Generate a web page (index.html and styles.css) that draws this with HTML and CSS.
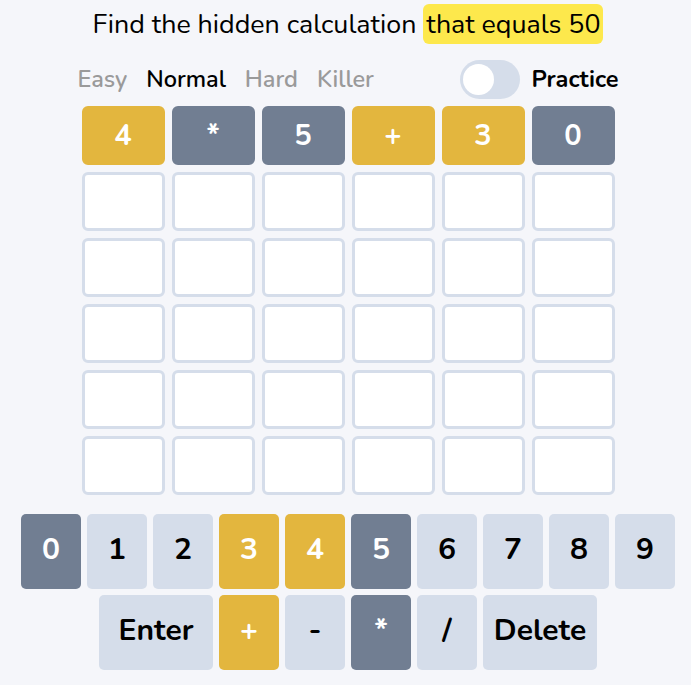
FILE: index.html
```html
<!DOCTYPE html>
<html lang="en">
<head>
  <meta charset="UTF-8">
  <meta name="viewport" content="width=device-width, initial-scale=1.0">
  <title>Calculation Game</title>
  <link rel="stylesheet" href="styles.css">
</head>
<body>
  <div class="game">
    <!-- Title -->
    <h1 class="title">Find the hidden calculation <span class="target">that equals 50</span></h1>

    <!-- Options -->
    <div class="options">
      <div class="levels">
        <span class="level">Easy</span>
        <span class="level active">Normal</span>
        <span class="level">Hard</span>
        <span class="level">Killer</span>
      </div>
      <label class="practice">
        <span class="switch"><span class="knob"></span></span>
        Practice
      </label>
    </div>

    <!-- Board -->
    <div class="board">
      <div class="tile present">4</div>
      <div class="tile absent">*</div>
      <div class="tile absent">5</div>
      <div class="tile present">+</div>
      <div class="tile present">3</div>
      <div class="tile absent">0</div>

      <div class="tile"></div><div class="tile"></div><div class="tile"></div>
      <div class="tile"></div><div class="tile"></div><div class="tile"></div>
      <div class="tile"></div><div class="tile"></div><div class="tile"></div>
      <div class="tile"></div><div class="tile"></div><div class="tile"></div>
      <div class="tile"></div><div class="tile"></div><div class="tile"></div>
      <div class="tile"></div><div class="tile"></div><div class="tile"></div>
      <div class="tile"></div><div class="tile"></div><div class="tile"></div>
      <div class="tile"></div><div class="tile"></div><div class="tile"></div>
      <div class="tile"></div><div class="tile"></div><div class="tile"></div>
      <div class="tile"></div><div class="tile"></div><div class="tile"></div>
    </div>

    <!-- Keyboard -->
    <div class="keyboard">
      <div class="key-row">
        <button class="key absent">0</button>
        <button class="key">1</button>
        <button class="key">2</button>
        <button class="key present">3</button>
        <button class="key present">4</button>
        <button class="key absent">5</button>
        <button class="key">6</button>
        <button class="key">7</button>
        <button class="key">8</button>
        <button class="key">9</button>
      </div>
      <div class="key-row">
        <button class="key wide">Enter</button>
        <button class="key present">+</button>
        <button class="key">-</button>
        <button class="key absent">*</button>
        <button class="key">/</button>
        <button class="key wide">Delete</button>
      </div>
    </div>
  </div>
</body>
</html>
```

FILE: styles.css
```css
/* General Styles */
body {
  margin: 0;
  background: #f5f6fa;
  font-family: 'Nunito', 'Open Sans', sans-serif;
  color: #000;
}

.game {
  display: flex;
  flex-direction: column;
  align-items: center;
  padding-left: 5px;
}

/* Title */
.title {
  margin: 7px 0 0;
  font-size: 26.8px;
  font-weight: 400;
  line-height: 34px;
}

.target {
  background: #fde84c;
  border-radius: 6px;
  padding: 2px 3px;
}

/* Options */
.options {
  display: flex;
  align-items: center;
  justify-content: space-between;
  width: 541px;
  height: 40px;
  margin-top: 18px;
}

.levels {
  display: flex;
  gap: 19px;
}

.level {
  font-size: 23.5px;
  font-weight: 600;
  color: #9a9a9a;
}

.level.active {
  color: #000;
}

.practice {
  display: flex;
  align-items: center;
  gap: 11px;
  font-size: 23.5px;
  font-weight: 700;
}

.switch {
  display: block;
  width: 60px;
  height: 39px;
  border-radius: 20px;
  background: #d5ddea;
  padding: 4px 3px;
  box-sizing: border-box;
}

.knob {
  display: block;
  width: 31px;
  height: 31px;
  border-radius: 50%;
  background: #fff;
}

/* Board */
.board {
  display: grid;
  grid-template-columns: repeat(6, 83px);
  grid-auto-rows: 59px;
  gap: 7px;
  margin-top: 7px;
}

.tile {
  display: flex;
  align-items: center;
  justify-content: center;
  background: #fff;
  border: 3px solid #d5ddea;
  border-radius: 6px;
  font-size: 29px;
  font-weight: 700;
  color: #fff;
}

.tile.present {
  background: #e3b63e;
  border-color: #e3b63e;
}

.tile.absent {
  background: #717e92;
  border-color: #717e92;
}

/* Keyboard */
.keyboard {
  display: flex;
  flex-direction: column;
  align-items: center;
  gap: 6px;
  margin-top: 19px;
}

.key-row {
  display: flex;
  gap: 6px;
}

.key {
  width: 60px;
  height: 75px;
  border: none;
  border-radius: 5px;
  background: #d5ddea;
  font-family: inherit;
  font-size: 30px;
  font-weight: 700;
  color: #000;
  padding: 0 0 4px;
}

.key.wide {
  width: 114px;
}

.key.present {
  background: #e3b63e;
  color: #fff;
}

.key.absent {
  background: #717e92;
  color: #fff;
}
```
